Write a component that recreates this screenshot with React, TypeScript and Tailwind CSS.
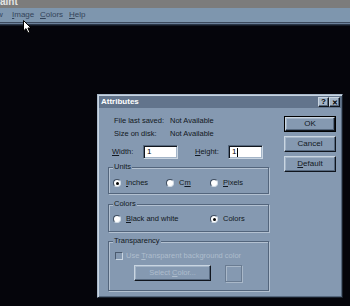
import React from "react";

const raised =
  "border border-t-[#c9d5e1] border-l-[#c9d5e1] border-b-[#10151d] border-r-[#10151d] shadow-[inset_-1px_-1px_0_#56687e,inset_1px_1px_0_#a3b4c7]";
const sunken =
  "border border-t-[#56687e] border-l-[#56687e] border-b-[#c9d5e1] border-r-[#c9d5e1] shadow-[inset_1px_1px_0_#10151d,inset_-1px_-1px_0_#a3b4c7]";

function Group({ label, h, mt, children }: { label: string; h: string; mt: string; children: React.ReactNode }) {
  return (
    <div
      className={`relative ${h} ${mt} w-[161px] border border-[#53657c] shadow-[inset_1px_1px_0_#b3c1d1,1px_1px_0_#b3c1d1]`}
    >
      <span className="absolute left-[4px] -top-[6px] px-[1px] bg-[#8599b1] leading-[10px] text-[#121821] whitespace-nowrap">
        {label}
      </span>
      {children}
    </div>
  );
}

function Radio({ checked }: { checked?: boolean }) {
  return (
    <span className="relative flex items-center justify-center w-[8px] h-[8px] rounded-full bg-white border border-t-[#3c4b5e] border-l-[#3c4b5e] border-b-[#d0dae4] border-r-[#d0dae4] shrink-0">
      {checked && <span className="w-[3px] h-[3px] rounded-full bg-black" />}
    </span>
  );
}

function U({ children }: { children: React.ReactNode }) {
  return <span className="underline underline-offset-[1px] decoration-[1px]">{children}</span>;
}

export default function App() {
  return (
    <div className="relative w-[350px] h-[306px] overflow-hidden bg-[#05050b] font-['Liberation_Sans',Arial,sans-serif] text-[7.5px] text-[#121821] whitespace-nowrap">
      {/* window title strip */}
      <div className="h-[8px] bg-[#7c7c7c] overflow-hidden">
        <div className="-mt-[4px] text-[10px] font-bold text-[#e4e4e4] leading-[12px]">aint</div>
      </div>
      {/* menu bar */}
      <div className="h-[14px] bg-[#7e96ae] flex items-center text-[8px] text-[#34445a] leading-none overflow-hidden">
        <span className="-ml-[3px] w-[15px]">w</span>
        <span className="w-[28px]">
          <U>I</U>mage
        </span>
        <span className="w-[29px]">
          <U>C</U>olors
        </span>
        <span>
          <U>H</U>elp
        </span>
      </div>
      <div className="h-[1px] bg-[#3c4a5e]" />
      <div className="h-[1px] bg-[#6b809a]" />
      <div className="h-[1px] bg-[#2a3545]" />
      <div className="h-[1px] bg-[#141a26]" />

      {/* dialog */}
      <div className="pl-[97px] pt-[68px]">
        <div className="w-[246px] h-[204px] bg-[#8599b1] p-[1px] border border-t-[#a9b9cb] border-l-[#a9b9cb] border-b-[#1a212c] border-r-[#1a212c] shadow-[inset_1px_1px_0_#c9d5e1,inset_-1px_-1px_0_#56687e]">
          {/* title bar */}
          <div className="h-[12px] bg-[#62748c] flex items-center justify-between pl-[2px] pr-[1px]">
            <span className="text-white font-bold text-[8px] leading-none">Attributes</span>
            <div className="flex">
              <span className={`w-[11px] h-[10px] bg-[#a3b4c6] flex items-center justify-center text-[8px] font-bold text-black leading-none ${raised}`}>
                ?
              </span>
              <span className={`w-[11px] h-[10px] bg-[#a3b4c6] flex items-center justify-center text-[7px] font-bold text-black leading-none ${raised}`}>
                ✕
              </span>
            </div>
          </div>

          {/* body */}
          <div className="flex pl-[9px]">
            {/* left column */}
            <div className="flex flex-col pt-[6px] w-[161px]">
              <div className="h-[13px] flex items-center">
                <span className="w-[62px] pl-[6px]">File last saved:</span>
                <span>Not Available</span>
              </div>
              <div className="h-[13px] flex items-center">
                <span className="w-[62px] pl-[6px]">Size on disk:</span>
                <span>Not Available</span>
              </div>
              <div className="mt-[5px] h-[14px] flex items-center">
                <span className="w-[35px] pl-[4px]">
                  <U>W</U>idth:
                </span>
                <span className={`w-[35px] h-[14px] bg-white flex items-center pl-[3px] text-black text-[8px] ${sunken}`}>1</span>
                <span className="ml-[17px] w-[33px]">
                  <U>H</U>eight:
                </span>
                <span className={`w-[35px] h-[14px] bg-white flex items-center pl-[3px] text-black text-[8px] ${sunken}`}>
                  1<span className="w-[1px] h-[9px] bg-black ml-[1px]" />
                </span>
              </div>

              <Group label="Units" h="h-[27px]" mt="mt-[8px]">
                <div className="flex items-center h-[8px] mt-[11px] pl-[4px]">
                  <span className="w-[53px] flex items-center gap-[5px] leading-none">
                    <Radio checked />
                    <span>
                      <U>I</U>nches
                    </span>
                  </span>
                  <span className="w-[44px] flex items-center gap-[5px] leading-none">
                    <Radio />
                    <span>
                      C<U>m</U>
                    </span>
                  </span>
                  <span className="flex items-center gap-[5px] leading-none">
                    <Radio />
                    <span>
                      <U>P</U>ixels
                    </span>
                  </span>
                </div>
              </Group>

              <Group label="Colors" h="h-[28px]" mt="mt-[10px]">
                <div className="flex items-center h-[8px] mt-[10px] pl-[4px]">
                  <span className="w-[97px] flex items-center gap-[5px] leading-none">
                    <Radio />
                    <span>
                      <U>B</U>lack and white
                    </span>
                  </span>
                  <span className="flex items-center gap-[5px] leading-none">
                    <Radio checked />
                    <span>Colors</span>
                  </span>
                </div>
              </Group>

              <Group label="Transparency" h="h-[50px]" mt="mt-[9px]">
                <div className="flex items-center h-[8px] mt-[10px] pl-[6px]">
                  <span className="w-[8px] h-[8px] border border-t-[#4a5a6e] border-l-[#4a5a6e] border-b-[#c9d5e1] border-r-[#c9d5e1] shrink-0" />
                  <span className="ml-[3px] leading-none text-[#aebdcd]">
                    Use <U>T</U>ransparent background color
                  </span>
                </div>
                <div className="flex mt-[5px] pl-[25px]">
                  <span className={`w-[77px] h-[16px] flex items-center justify-center text-[#aebdcd] ${raised}`}>
                    Select&nbsp;<U>C</U>olor...
                  </span>
                  <span className="ml-[14px] w-[17px] h-[17px] border border-[#6a7c92] shadow-[inset_1px_1px_0_#a9b8c9,1px_1px_0_#a9b8c9]" />
                </div>
              </Group>
            </div>

            {/* right column */}
            <div className="ml-[15px] pt-[8px] flex flex-col gap-[4px] text-[8px]">
              <div className="w-[52px] h-[16px] border border-black">
                <div className={`w-full h-full flex items-center justify-center ${raised}`}>OK</div>
              </div>
              <div className={`w-[52px] h-[16px] flex items-center justify-center ${raised}`}>Cancel</div>
              <div className={`w-[52px] h-[16px] flex items-center justify-center ${raised}`}>
                <U>D</U>efault
              </div>
            </div>
          </div>
        </div>
      </div>

      {/* mouse cursor */}
      <svg className="absolute left-[23px] top-[20px]" width="10" height="14" viewBox="0 0 10 14">
        <path d="M0.5 0.5 L0.5 11 L3 8.6 L5 13 L6.8 12.2 L4.9 8 L8 8 Z" fill="#ffffff" stroke="#000000" strokeWidth="1" />
      </svg>
    </div>
  );
}
